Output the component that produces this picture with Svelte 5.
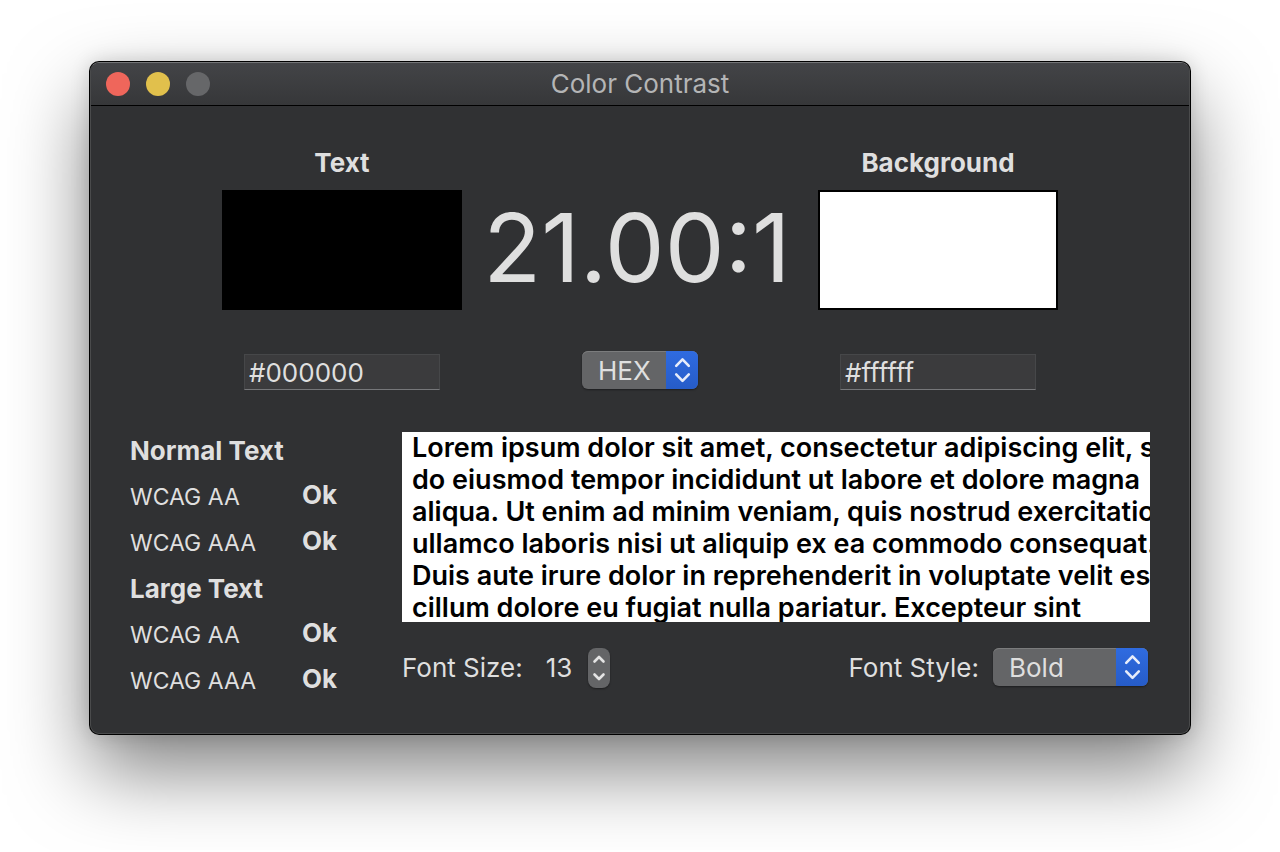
<script>
  let textColor = $state('#000000');
  let backgroundColor = $state('#ffffff');
  let format = $state('HEX');
  let fontSize = $state(13);
  let fontStyle = $state('Bold');

  const groups = [
    { title: 'Normal Text', large: false },
    { title: 'Large Text', large: true }
  ];

  function luminance(hex) {
    const n = parseInt(hex.slice(1), 16) || 0;
    const [r, g, b] = [n >> 16, (n >> 8) & 255, n & 255].map((v) => {
      const c = v / 255;
      return c <= 0.03928 ? c / 12.92 : ((c + 0.055) / 1.055) ** 2.4;
    });
    return 0.2126 * r + 0.7152 * g + 0.0722 * b;
  }

  const ratio = $derived.by(() => {
    const a = luminance(textColor);
    const b = luminance(backgroundColor);
    return (Math.max(a, b) + 0.05) / (Math.min(a, b) + 0.05);
  });

  function verdict(level, large) {
    const needed = level === 'AA' ? (large ? 3 : 4.5) : large ? 4.5 : 7;
    return ratio >= needed ? 'Ok' : 'Fail';
  }

  const sample = [
    'Lorem ipsum dolor sit amet, consectetur adipiscing elit, s',
    'do eiusmod tempor incididunt ut labore et dolore magna',
    'aliqua. Ut enim ad minim veniam, quis nostrud exercitatio',
    'ullamco laboris nisi ut aliquip ex ea commodo consequat.',
    'Duis aute irure dolor in reprehenderit in voluptate velit es',
    'cillum dolore eu fugiat nulla pariatur. Excepteur sint'
  ];
</script>

{#snippet arrows()}
  <span class="arrows">
    <svg width="32" height="38" viewBox="0 0 32 38" fill="none" stroke="#e6ecfa" stroke-width="2.6" stroke-linecap="round" stroke-linejoin="round" aria-hidden="true">
      <path d="M10.2 14.8 16.5 8.4 22.8 14.8M10.2 23.4 16.5 29.8 22.8 23.4" />
    </svg>
  </span>
{/snippet}

<main>
  <section class="window">
    <header>
      <div class="lights">
        <button class="close" aria-label="Close"></button>
        <button class="minimize" aria-label="Minimize"></button>
        <button class="zoom" aria-label="Zoom" disabled></button>
      </div>
      <h1>Color Contrast</h1>
    </header>

    <div class="content">
      <div class="colors">
        <label class="name" for="text-color">Text</label>
        <span></span>
        <label class="name" for="background-color">Background</label>

        <div class="swatch" style="background:{textColor}"></div>
        <output class="ratio">{ratio.toFixed(2)}:1</output>
        <div class="swatch" style="background:{backgroundColor}"></div>

        <input id="text-color" type="text" bind:value={textColor} />
        <div class="popup format">
          <select aria-label="Format" bind:value={format}>
            <option>HEX</option>
            <option>RGB</option>
          </select>
          {@render arrows()}
        </div>
        <input id="background-color" type="text" bind:value={backgroundColor} />
      </div>

      <div class="details">
        <div class="results">
          {#each groups as group}
            <h2>{group.title}</h2>
            <dl>
              {#each ['AA', 'AAA'] as level}
                <dt>WCAG {level}</dt>
                <dd>{verdict(level, group.large)}</dd>
              {/each}
            </dl>
          {/each}
        </div>

        <div class="preview">
          <div
            class="sample"
            style="color:{textColor};background:{backgroundColor};font-size:{fontSize * 2 + 1}px;font-weight:{fontStyle === 'Bold' ? 600 : 400}"
          >
            {#each sample as line}
              <div>{line}</div>
            {/each}
          </div>

          <div class="options">
            <span>Font Size:</span>
            <output class="size">{fontSize}</output>
            <div class="stepper">
              <button aria-label="Increase font size" onclick={() => fontSize++}>
                <svg width="22" height="20" viewBox="0 0 22 20" aria-hidden="true"><path d="M6.5 13.5 11 9 15.5 13.5" /></svg>
              </button>
              <button aria-label="Decrease font size" onclick={() => fontSize--}>
                <svg width="22" height="20" viewBox="0 0 22 20" aria-hidden="true"><path d="M6.5 6.5 11 11 15.5 6.5" /></svg>
              </button>
            </div>
            <label class="style-label" for="font-style">Font Style:</label>
            <div class="popup style">
              <select id="font-style" bind:value={fontStyle}>
                <option>Bold</option>
                <option>Regular</option>
              </select>
              {@render arrows()}
            </div>
          </div>
        </div>
      </div>
    </div>
  </section>
</main>

<style>
  :global(body) {
    background: #fff;
  }

  main {
    padding: 62px 90px 116px;
    font-family: Inter, 'Liberation Sans', sans-serif;
    font-size: 26px;
    line-height: 32px;
    color: #dfdfdf;
  }

  .window {
    border-radius: 9px;
    background: #303133;
    overflow: hidden;
    box-shadow:
      0 0 0 1px #000,
      0 0 20px rgba(0, 0, 0, 0.16),
      0 36px 80px rgba(0, 0, 0, 0.5);
    border: 1px solid #4a4b4c;
    border-top-color: #747577;
  }

  header {
    display: grid;
    grid-template-columns: 1fr auto 1fr;
    align-items: center;
    height: 42px;
    padding: 0 15px;
    background: linear-gradient(#434447, #363739);
    border-bottom: 1px solid #000;
  }

  .lights {
    display: flex;
    gap: 16px;
  }

  .lights button {
    width: 24px;
    height: 24px;
    padding: 0;
    border: 0;
    border-radius: 50%;
  }

  .close {
    background: #ef665b;
  }

  .minimize {
    background: #e1c04c;
  }

  .zoom {
    background: #666769;
  }

  h1 {
    margin: 0;
    font-size: 26px;
    font-weight: 400;
    line-height: 34px;
    color: #b4b5b6;
  }

  .content {
    padding: 40px 39px 29px;
  }

  .colors {
    display: grid;
    grid-template-columns: 240px 1fr 240px;
    justify-items: center;
    align-items: center;
    max-width: 836px;
    margin: 0 auto;
  }

  .name {
    height: 44px;
    line-height: 34px;
    font-weight: 700;
  }

  .swatch {
    box-sizing: border-box;
    width: 240px;
    height: 120px;
    border: 2px solid #000;
  }

  .ratio {
    align-self: start;
    margin-right: 6px;
    font-size: 95px;
    line-height: 116px;
  }

  input {
    box-sizing: border-box;
    width: 196px;
    height: 36px;
    margin: 44px 0 42px;
    padding: 0 4px;
    border: 1px solid #464749;
    border-bottom: 1px solid #76777a;
    background: #3b3b3d;
    color: inherit;
    font: inherit;
  }

  .popup {
    display: grid;
    height: 38px;
    border-radius: 6px;
    background: #646567;
    overflow: hidden;
    box-shadow:
      0 1px 2px rgba(0, 0, 0, 0.4),
      inset 0 1px #7b7c7d;
  }

  .popup > * {
    grid-area: 1 / 1;
  }

  select {
    width: 100%;
    padding: 2px 32px 0 16px;
    border: 0;
    appearance: none;
    background: transparent;
    color: inherit;
    font: inherit;
  }

  .arrows {
    justify-self: end;
    width: 32px;
    height: 38px;
    background: linear-gradient(#2f6be0, #265cc8);
    pointer-events: none;
  }

  .format {
    width: 116px;
    margin-bottom: 2px;
  }

  .style {
    width: 155px;
    margin: 0 2px 2px 14px;
  }

  .details {
    display: grid;
    grid-template-columns: 272px 1fr;
  }

  .results {
    margin-top: -4px;
  }

  h2 {
    margin: 0;
    font-size: 26px;
    line-height: 46px;
    font-weight: 700;
  }

  dl {
    display: grid;
    grid-template-columns: 172px 1fr;
    align-items: start;
    grid-auto-rows: 46px;
    margin: 0;
    line-height: 46px;
  }

  dt {
    font-size: 23px;
  }

  dd {
    margin: 0;
    font-weight: 700;
    line-height: 42px;
  }

  .preview {
    min-width: 0;
  }

  .sample {
    height: 190px;
    padding-left: 10px;
    box-sizing: border-box;
    overflow: hidden;
    white-space: nowrap;
  }

  .options {
    display: flex;
    align-items: center;
    margin-top: 26px;
  }

  .size {
    margin-left: 23px;
  }

  .stepper {
    display: flex;
    flex-direction: column;
    margin-left: 16px;
    border-radius: 8px;
    background: #646567;
    overflow: hidden;
    box-shadow: 0 1px 2px rgba(0, 0, 0, 0.4);
  }

  .stepper button {
    display: flex;
    padding: 0;
    border: 0;
    background: transparent;
  }

  .stepper path {
    fill: none;
    stroke: #e4e4e4;
    stroke-width: 2.6;
    stroke-linecap: round;
    stroke-linejoin: round;
  }

  .style-label {
    margin-left: auto;
  }
</style>
